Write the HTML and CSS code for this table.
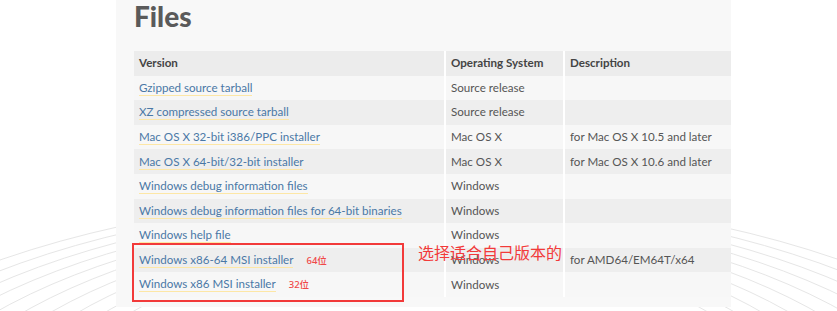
FILE: index.html
```html
<!DOCTYPE html>
<html>
<head>
<meta charset="utf-8">
<link rel="stylesheet" href="styles.css">
</head>
<body>
<svg class="arcs" width="837" height="311" viewBox="0 0 837 311">
  <g fill="none" stroke="#e6e6e6" stroke-width="1">
    <ellipse cx="420" cy="520" rx="700" ry="325"/>
    <ellipse cx="420" cy="520" rx="670" ry="320"/>
    <ellipse cx="420" cy="520" rx="640" ry="315"/>
    <ellipse cx="420" cy="520" rx="610" ry="310"/>
    <ellipse cx="420" cy="520" rx="580" ry="305"/>
    <ellipse cx="420" cy="520" rx="550" ry="300"/>
    <ellipse cx="420" cy="520" rx="520" ry="295"/>
    <ellipse cx="420" cy="520" rx="490" ry="290"/>
    <ellipse cx="420" cy="520" rx="460" ry="285"/>
    <ellipse cx="420" cy="520" rx="430" ry="280"/>
  </g>
</svg>
<div class="panel">
  <h1 class="title">Files</h1>
  <table class="files">
    <colgroup><col class="c1"><col class="c2"><col class="c3"></colgroup>
    <thead>
      <tr><th>Version</th><th>Operating System</th><th>Description</th></tr>
    </thead>
    <tbody>
      <tr><td><a>Gzipped source tarball</a></td><td>Source release</td><td></td></tr>
      <tr><td><a>XZ compressed source tarball</a></td><td>Source release</td><td></td></tr>
      <tr><td><a>Mac OS X 32-bit i386/PPC installer</a></td><td>Mac OS X</td><td>for Mac OS X 10.5 and later</td></tr>
      <tr><td><a>Mac OS X 64-bit/32-bit installer</a></td><td>Mac OS X</td><td>for Mac OS X 10.6 and later</td></tr>
      <tr><td><a>Windows debug information files</a></td><td>Windows</td><td></td></tr>
      <tr><td><a>Windows debug information files for 64-bit binaries</a></td><td>Windows</td><td></td></tr>
      <tr><td><a>Windows help file</a></td><td>Windows</td><td></td></tr>
      <tr><td><a>Windows x86-64 MSI installer</a><span class="note">64位</span></td><td>Windows</td><td>for AMD64/EM64T/x64</td></tr>
      <tr><td><a>Windows x86 MSI installer</a><span class="note">32位</span></td><td>Windows</td><td></td></tr>
    </tbody>
  </table>
  <div class="redbox"></div>
  <div class="callout">选择适合自己版本的</div>
</div>
</body>
</html>
```
FILE: styles.css
```css
html, body {
  margin: 0;
  padding: 0;
  background: #ffffff;
  width: 837px;
  height: 311px;
  overflow: hidden;
}
body {
  position: relative;
  font-family: Lato, "Noto Sans", sans-serif;
}
.arcs {
  position: absolute;
  left: 0;
  top: 0;
  z-index: 0;
}
.panel {
  position: relative;
  z-index: 1;
  margin-left: 116px;
  width: 615px;
  height: 307px;
  background: #f8f8f8;
  padding-left: 18px;
  box-sizing: border-box;
  overflow: hidden;
}
.title {
  margin: 0;
  height: 51px;
  padding-top: 1px;
  box-sizing: border-box;
  font-size: 28px;
  line-height: 30px;
  font-weight: 900;
  color: #5a5a5a;
}
.files {
  border-collapse: collapse;
  table-layout: fixed;
  width: 640px;
  font-size: 11.6px;
}
.files col.c1 { width: 311px; }
.files col.c2 { width: 119px; }
.files col.c3 { width: 210px; }
.files th, .files td {
  height: 24.6px;
  padding: 0 0 1px 5px;
  box-sizing: border-box;
  text-align: left;
  vertical-align: middle;
  border-right: 2px solid #ffffff;
  white-space: nowrap;
  color: #555;
}
.files th {
  background: #ececec;
  font-weight: 700;
  color: #444;
}
.files tbody tr:nth-child(odd) td { background: #f7f7f7; }
.files tbody tr:nth-child(even) td { background: #eeeeee; }
.files a {
  color: #4a78a6;
  text-decoration: none;
  border-bottom: 1px solid #fde7a6;
  padding-bottom: 1px;
}
.note {
  margin-left: 13px;
  color: #f04848;
  font-size: 9.5px;
  font-weight: 500;
  font-family: "Noto Sans", "Noto Sans CJK SC", sans-serif;
}
.redbox {
  position: absolute;
  left: 16px;
  top: 243px;
  width: 272px;
  height: 59px;
  border: 2px solid #f23a3a;
  box-sizing: border-box;
}
.callout {
  position: absolute;
  left: 302px;
  top: 241px;
  font-family: "Noto Sans CJK SC", sans-serif;
  font-size: 16px;
  line-height: 22px;
  color: #f23a3a;
}
```
